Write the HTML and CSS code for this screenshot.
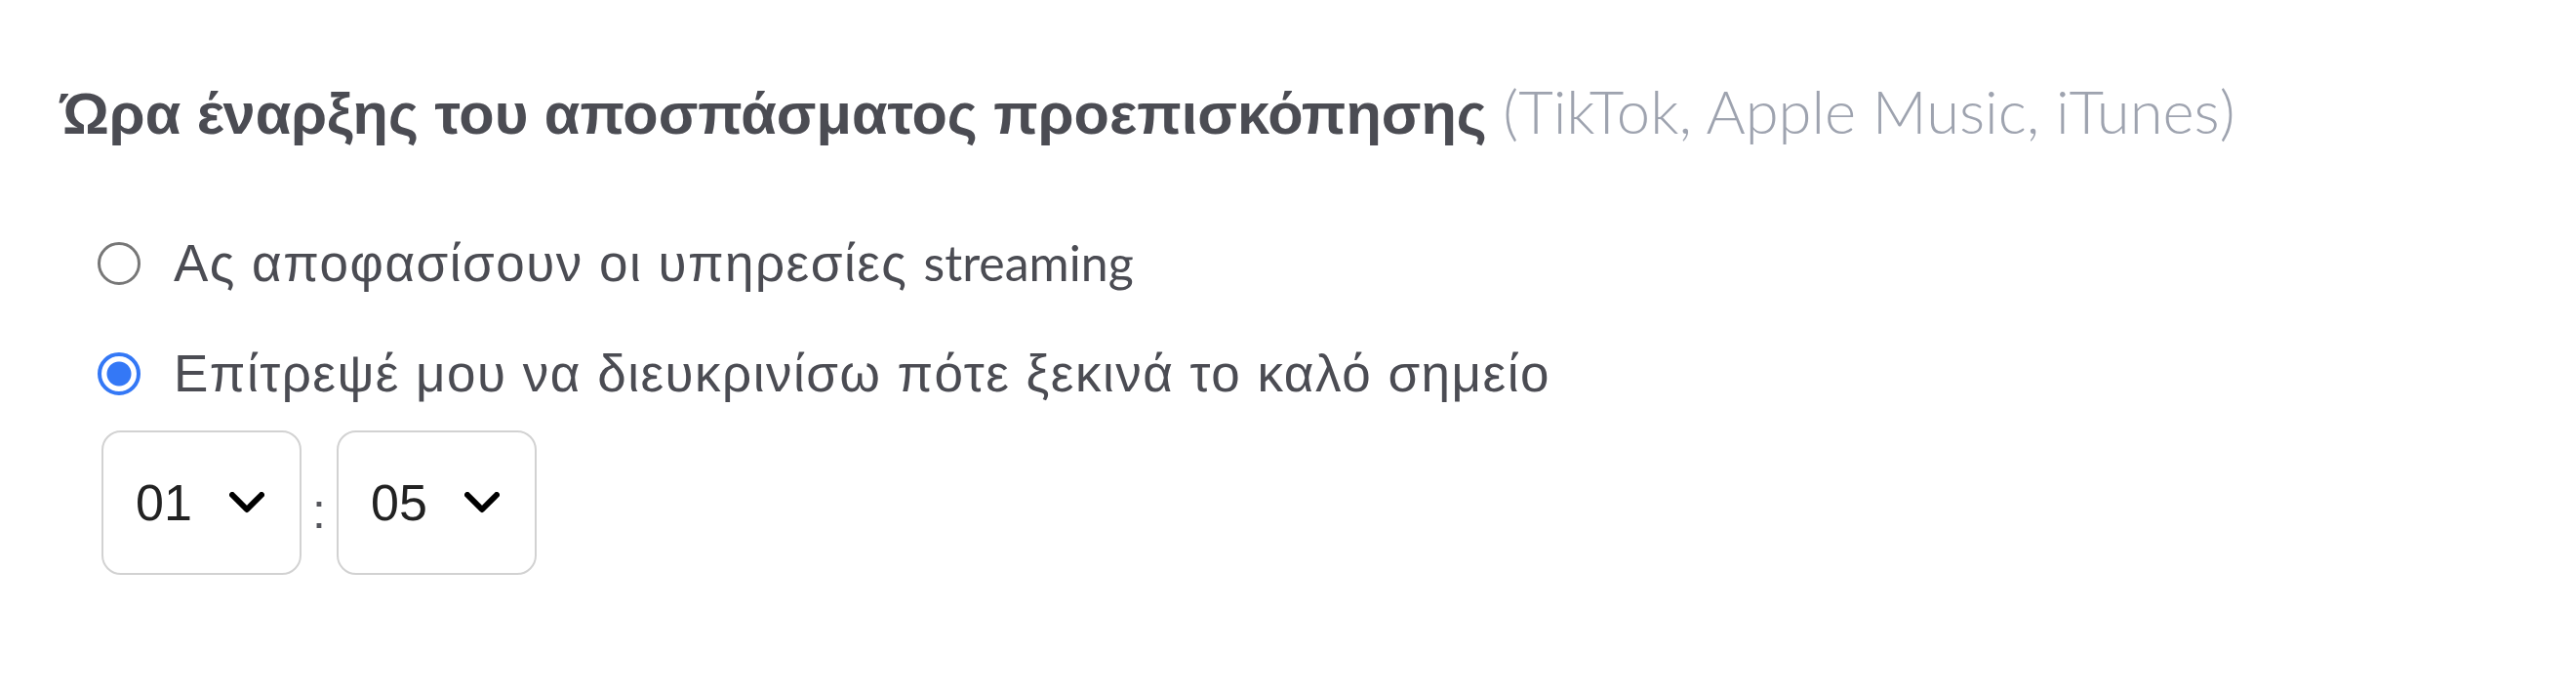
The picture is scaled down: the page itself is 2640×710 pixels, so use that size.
FILE: index.html
```html
<!DOCTYPE html>
<html lang="el">
  <head>
    <meta charset="utf-8">
    <meta name="viewport" content="width=device-width, initial-scale=1">
    <title>Ώρα έναρξης αποσπάσματος</title>
    <link rel="stylesheet" href="styles.css">
  </head>
  <body>
    <section class="field">
      <h2 class="field-title">Ώρα έναρξης του αποσπάσματος προεπισκόπησης <span class="hint">(TikTok, Apple Music, iTunes)</span></h2>
      <div class="options">
        <label class="option">
          <input type="radio" name="preview" value="auto">
          <span>Ας αποφασίσουν οι υπηρεσίες <span class="latin">streaming</span></span>
        </label>
        <label class="option">
          <input type="radio" name="preview" value="custom" checked>
          <span>Επίτρεψέ μου να διευκρινίσω πότε ξεκινά το καλό σημείο</span>
        </label>
      </div>
      <div class="time">
        <div class="picker">
          <select id="minutes">
            <option>00</option>
            <option selected>01</option>
            <option>02</option>
            <option>03</option>
          </select>
          <svg class="chevron" viewBox="0 0 36 22" width="36" height="22"><path d="M3 3 L18 18 L33 3" fill="none" stroke="#000" stroke-width="6" stroke-linecap="round" stroke-linejoin="round"/></svg>
        </div>
        <span class="colon">:</span>
        <div class="picker">
          <select id="seconds">
            <option>00</option>
            <option selected>05</option>
            <option>10</option>
            <option>15</option>
          </select>
          <svg class="chevron" viewBox="0 0 36 22" width="36" height="22"><path d="M3 3 L18 18 L33 3" fill="none" stroke="#000" stroke-width="6" stroke-linecap="round" stroke-linejoin="round"/></svg>
        </div>
      </div>
    </section>
  </body>
</html>
```

FILE: styles.css
```css
body {
  margin: 0;
  background: #fff;
  font-family: "Liberation Sans", Arial, sans-serif;
  color: #4b4c53;
}

.latin,
.hint {
  font-family: Lato, "Liberation Sans", sans-serif;
}

.field {
  padding: 70px 0 0 62px;
}

.field-title {
  margin: 0;
  font-size: 59.5px;
  font-weight: 700;
  line-height: 87px;
}

.hint {
  font-size: 61.5px;
  font-weight: 300;
  color: #9ea3af;
}

.options {
  display: flex;
  flex-direction: column;
  gap: 45px;
  margin-top: 75px;
  padding-left: 38px;
}

.option {
  display: flex;
  align-items: center;
  gap: 34px;
  font-size: 53px;
  letter-spacing: 1.5px;
  line-height: 68px;
}

.option .latin {
  font-size: 50px;
  letter-spacing: 0;
}

.option input {
  appearance: none;
  margin: 0;
  width: 44px;
  height: 44px;
  border: 3px solid #777;
  border-radius: 50%;
  box-sizing: border-box;
  flex: none;
}

.option input:checked {
  border: 4px solid #3478f6;
  background: radial-gradient(circle, #3478f6 0 12px, #fff 13px);
}

.time {
  display: flex;
  align-items: center;
  gap: 10px;
  margin-top: 24px;
  padding-left: 42px;
}

.picker {
  display: flex;
  align-items: center;
  width: 205px;
  height: 148px;
  box-sizing: border-box;
  border: 2px solid #d2d2d2;
  border-radius: 20px;
  padding: 0 36px 0 33px;
}

.picker select {
  appearance: none;
  border: 0;
  background: transparent;
  font-family: "Liberation Sans", Arial, sans-serif;
  font-size: 52px;
  color: #222;
  padding: 0;
  flex: 1;
  outline: none;
}

.chevron {
  flex: none;
  pointer-events: none;
}

.colon {
  font-family: "Liberation Sans", Arial, sans-serif;
  font-size: 50px;
  color: #55565c;
  width: 16px;
  text-align: center;
  padding-top: 18px;
}
```
